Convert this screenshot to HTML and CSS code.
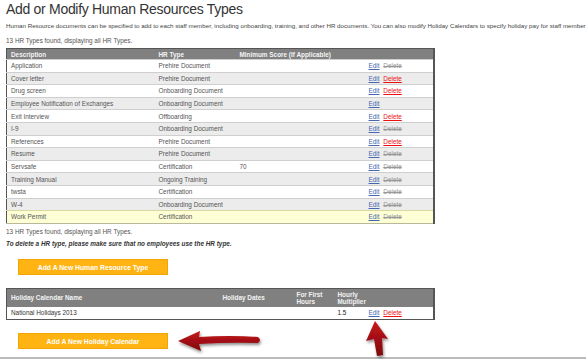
FILE: index.html
```html
<!DOCTYPE html>
<html lang="en">
<head>
    <meta charset="UTF-8">
    <title>Human Resources Types</title>
    <link rel="stylesheet" href="styles.css">
</head>
<body>
    <div class="page">
        <h1>Add or Modify Human Resources Types</h1>
        <p class="intro">Human Resource documents can be specified to add to each staff member, including onboarding, training, and other HR documents. You can also modify Holiday Calendars to specify holiday pay for staff member</p>
        <p class="count">13 HR Types found, displaying all HR Types.</p>

        <table class="grid hr-types">
            <colgroup>
                <col class="c-desc"><col class="c-type"><col class="c-score"><col class="c-act">
            </colgroup>
            <tr>
                <th>Description</th><th>HR Type</th><th>Minimum Score (If Applicable)</th><th></th>
            </tr>
            <tr><td>Application</td><td>Prehire Document</td><td></td><td><a class="edit">Edit</a> <span class="del off">Delete</span></td></tr>
            <tr><td>Cover letter</td><td>Prehire Document</td><td></td><td><a class="edit">Edit</a> <a class="del">Delete</a></td></tr>
            <tr><td>Drug screen</td><td>Onboarding Document</td><td></td><td><a class="edit">Edit</a> <a class="del">Delete</a></td></tr>
            <tr><td>Employee Notification of Exchanges</td><td>Onboarding Document</td><td></td><td><a class="edit">Edit</a></td></tr>
            <tr><td>Exit Interview</td><td>Offboarding</td><td></td><td><a class="edit">Edit</a> <a class="del">Delete</a></td></tr>
            <tr><td>I-9</td><td>Onboarding Document</td><td></td><td><a class="edit">Edit</a> <span class="del off">Delete</span></td></tr>
            <tr><td>References</td><td>Prehire Document</td><td></td><td><a class="edit">Edit</a> <a class="del">Delete</a></td></tr>
            <tr><td>Resume</td><td>Prehire Document</td><td></td><td><a class="edit">Edit</a> <span class="del off">Delete</span></td></tr>
            <tr><td>Servsafe</td><td>Certification</td><td>70</td><td><a class="edit">Edit</a> <span class="del off">Delete</span></td></tr>
            <tr><td>Training Manual</td><td>Ongoing Training</td><td></td><td><a class="edit">Edit</a> <span class="del off">Delete</span></td></tr>
            <tr><td>twsta</td><td>Certification</td><td></td><td><a class="edit">Edit</a> <span class="del off">Delete</span></td></tr>
            <tr><td>W-4</td><td>Onboarding Document</td><td></td><td><a class="edit">Edit</a> <span class="del off">Delete</span></td></tr>
            <tr class="picked"><td>Work Permit</td><td>Certification</td><td></td><td><a class="edit">Edit</a> <span class="del off">Delete</span></td></tr>
        </table>

        <p class="count after">13 HR Types found, displaying all HR Types.</p>
        <p class="note">To delete a HR type, please make sure that no employees use the HR type.</p>

        <div class="btn-row">
            <button class="add-btn">Add A New Human Resource Type</button>
        </div>

        <table class="grid holidays">
            <colgroup>
                <col class="h-name"><col class="h-dates"><col class="h-first"><col class="h-mult"><col class="c-act">
            </colgroup>
            <tr>
                <th>Holiday Calendar Name</th><th>Holiday Dates</th><th>For First<br>Hours</th><th>Hourly<br>Multiplier</th><th></th>
            </tr>
            <tr><td>National Holidays 2013</td><td></td><td></td><td class="num">1.5</td><td><a class="edit">Edit</a> <a class="del">Delete</a></td></tr>
        </table>

        <div class="btn-row second">
            <button class="add-btn">Add A New Holiday Calendar</button>
        </div>
    </div>
    <hr class="foot">

    <svg class="callouts" width="586" height="359" viewBox="0 0 586 359">
        <defs>
            <linearGradient id="redfill" x1="0" y1="0" x2="0" y2="1">
                <stop offset="0" stop-color="#c8161b"/>
                <stop offset="1" stop-color="#7c0a0c"/>
            </linearGradient>
            <filter id="shade" x="-20%" y="-20%" width="140%" height="160%">
                <feDropShadow dx="1" dy="2" stdDeviation="1.5" flood-color="#000" flood-opacity="0.45"/>
            </filter>
        </defs>
        <path d="M178 341 L200 331 L199 337 Q230 335 258 337 Q262 340 258 343 Q230 342 199 344 L201 351 Z" fill="url(#redfill)" filter="url(#shade)"/>
        <path d="M375 321 L388 339 L382 338 L383 355 L377 356 L374 339 L366 341 Z" fill="url(#redfill)" filter="url(#shade)"/>
    </svg>
</body>
</html>
```

FILE: styles.css
```css
body { margin: 0; font-family: "Liberation Sans", Arial, sans-serif; color: #444; background: #fff; }
.page { padding: 0 6px; width: 426px; }
h1 { margin: 0; padding-top: 1px; font-size: 14px; letter-spacing: -0.3px; line-height: 16px; font-weight: normal; color: #333; white-space: nowrap; }
p { margin: 0; font-size: 6.4px; white-space: nowrap; }
.intro { margin-top: 4px; line-height: 9px; font-size: 6.2px; }
.count { margin-top: 6px; line-height: 9px; color: #555; }
.count.after { margin-top: 3px; }
.note { margin-top: 3px; line-height: 9px; font-style: italic; font-weight: bold; color: #333; }

.grid { width: 427px; border-collapse: collapse; table-layout: fixed; font-size: 6.4px; border: 1px solid #555; border-right-width: 2px; }
.hr-types { margin-top: 3px; }
.grid th { background: #808080; color: #f4f4f4; text-align: left; font-weight: bold; height: 10px; padding: 0 3px; line-height: 7px; }
.grid td { height: 11.6px; padding: 0 3px; border-top: 1px solid #cfcfcf; color: #555; white-space: nowrap; }
.grid td:first-child, .grid th:first-child { padding-left: 4px; }
.hr-types tr:nth-child(odd) td { background: #ececec; }
.hr-types tr.picked td { background: #ffffd6; border-top-color: #d8d8a0; }
.hr-types { border-bottom-color: #b8b89a; }

.c-desc { width: 149px; }
.c-type { width: 81px; }
.c-score { width: 129px; }
.c-act { width: 68px; }
.h-name { width: 213px; }
.h-dates { width: 74px; }
.h-first { width: 41px; }
.h-mult { width: 31px; }

.holidays th { height: 18px; vertical-align: middle; }
.holidays td { height: 12px; background: #fff; border-top: none; color: #333; }
.holidays .num { color: #222; }

.edit { color: #4668b0; text-decoration: underline; margin-right: 2px; }
.del { color: #ee1111; text-decoration: underline; }
.del.off { color: #999; text-decoration: line-through; }

.btn-row { padding: 8px 0 0 12px; height: 16px; margin-bottom: 16px; }
.btn-row.second { padding-top: 10px; margin-bottom: 0; }
.add-btn { width: 150px; height: 16px; padding: 0; border: 1px solid #f4a400; background: #ffb414; color: #fff; font-family: "Liberation Sans", Arial, sans-serif; font-weight: bold; font-size: 6.8px; }

.foot { margin: 11px 0 0; border: none; height: 2px; background: #bbb; }
.callouts { position: absolute; left: 0; top: 0; pointer-events: none; }
```
